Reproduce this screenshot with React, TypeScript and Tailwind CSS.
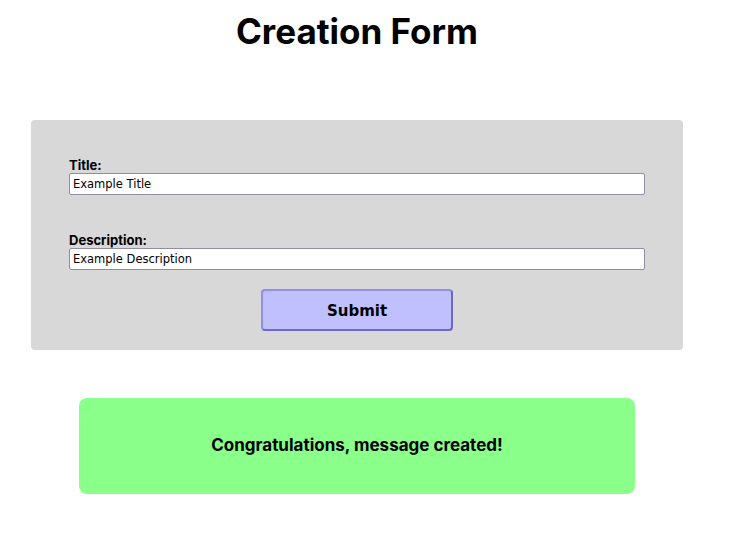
export default function App() {
  return (
    <div className="min-h-screen w-[714px] bg-white">
      <h1 className="pt-[11px] text-center font-['Inter',sans-serif] text-[35px] font-bold leading-[40px] text-black">
        Creation Form
      </h1>

      <form
        className="mx-[31px] mt-[69px] flex flex-col rounded-[4px] bg-[#d8d8d8] px-[38px] pt-[38px] pb-[19px]"
        onSubmit={(e) => e.preventDefault()}
      >
        <label className="font-['Inter',sans-serif] text-[13px] font-bold leading-[15px] text-black">
          Title:
        </label>
        <input
          defaultValue="Example Title"
          className="h-[22px] w-full rounded-[2px] border border-[#8f8d9e] bg-white px-[3px] font-['DejaVu_Sans',sans-serif] text-[11.5px] text-black outline-none"
        />

        <label className="mt-[38px] font-['Inter',sans-serif] text-[13px] font-bold leading-[15px] text-black">
          Description:
        </label>
        <input
          defaultValue="Example Description"
          className="h-[22px] w-full rounded-[2px] border border-[#8f8d9e] bg-white px-[3px] font-['DejaVu_Sans',sans-serif] text-[11.5px] text-black outline-none"
        />

        <button
          type="submit"
          className="mx-auto mt-[19px] h-[42px] w-[192px] rounded-[4px] border-2 border-[#8f8ff0] border-b-[#6a6ac0] border-r-[#6a6ac0] bg-[#c0c0ff] pt-[3px] font-['DejaVu_Sans',sans-serif] text-[15px] font-bold text-black"
        >
          Submit
        </button>
      </form>

      <div className="mx-[79px] mt-[48px] flex h-[96px] items-center justify-center rounded-[8px] bg-[#8aff8a]">
        <p className="font-['Inter',sans-serif] text-[17px] font-bold text-black">
          Congratulations, message created!
        </p>
      </div>
    </div>
  );
}
